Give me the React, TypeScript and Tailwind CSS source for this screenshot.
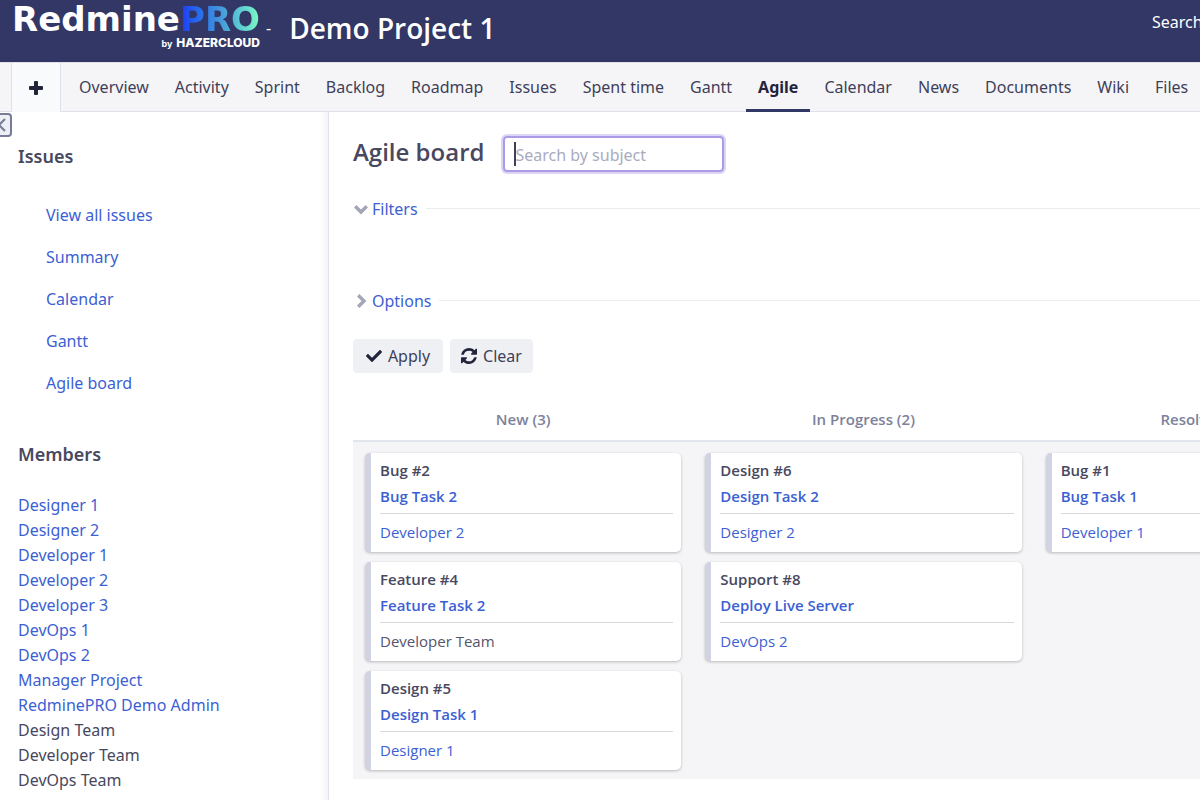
import React, { useState } from "react";
import { FaCheck } from "react-icons/fa";

type Card = {
  issue: string;
  subject: string;
  assignee: string;
  isGroup?: boolean;
};

type Column = {
  title: string;
  cards: Card[];
};

const tabs = [
  "Overview",
  "Activity",
  "Sprint",
  "Backlog",
  "Roadmap",
  "Issues",
  "Spent time",
  "Gantt",
  "Agile",
  "Calendar",
  "News",
  "Documents",
  "Wiki",
  "Files",
];

const issueLinks = ["View all issues", "Summary", "Calendar", "Gantt", "Agile board"];

const members = [
  "Designer 1",
  "Designer 2",
  "Developer 1",
  "Developer 2",
  "Developer 3",
  "DevOps 1",
  "DevOps 2",
  "Manager Project",
  "RedminePRO Demo Admin",
];

const groups = ["Design Team", "Developer Team", "DevOps Team"];

const columns: Column[] = [
  {
    title: "New (3)",
    cards: [
      { issue: "Bug #2", subject: "Bug Task 2", assignee: "Developer 2" },
      { issue: "Feature #4", subject: "Feature Task 2", assignee: "Developer Team", isGroup: true },
      { issue: "Design #5", subject: "Design Task 1", assignee: "Designer 1" },
    ],
  },
  {
    title: "In Progress (2)",
    cards: [
      { issue: "Design #6", subject: "Design Task 2", assignee: "Designer 2" },
      { issue: "Support #8", subject: "Deploy Live Server", assignee: "DevOps 2" },
    ],
  },
  {
    title: "Resolved (1)",
    cards: [{ issue: "Bug #1", subject: "Bug Task 1", assignee: "Developer 1" }],
  },
];

const Logo = () => (
  <a href="#" className="flex w-[248px] flex-col whitespace-nowrap">
    <span className="flex justify-between font-['DejaVu_Sans'] text-[34px] leading-8 font-bold">
      <span className="text-white">Redmine</span>
      <span className="bg-linear-to-r from-[#2433f5] via-[#4596dc] to-[#7dfcc0] bg-clip-text text-transparent">
        PRO
      </span>
    </span>
    <span className="flex items-baseline justify-end gap-1 pt-[2px] font-[Inter] leading-3 text-white">
      <span className="text-[9px] font-bold">by</span>
      <span className="text-xs leading-3 font-extrabold">HAZERCLOUD</span>
    </span>
  </a>
);

const PlusIcon = () => (
  <svg width="14" height="14" viewBox="0 0 14 14" fill="currentColor" aria-hidden="true">
    <path d="M6 0h2q1 0 1 1v4h4q1 0 1 1v2q0 1-1 1H9v4q0 1-1 1H6q-1 0-1-1V9H1Q0 9 0 8V6q0-1 1-1h4V1q0-1 1-1z" />
  </svg>
);

const ChevronIcon: React.FC<{ open: boolean }> = ({ open }) => (
  <svg width="14" height="14" viewBox="0 0 14 14" fill="none" stroke="currentColor" strokeWidth="3.4" aria-hidden="true">
    <path d={open ? "M1.200 4.200 7 10l5.800-5.800" : "M4.200 1.200 10 7l-5.800 5.800"} />
  </svg>
);

const RefreshIcon = () => (
  <svg width="16" height="16" viewBox="0 0 1536 1536" fill="currentColor" aria-hidden="true">
    <path d="M1511 928q0 5-1 7-64 268-268 434.500T764 1536q-146 0-282.500-55T238 1324l-129 129q-19 19-45 19t-45-19-19-45V960q0-26 19-45t45-19h448q26 0 45 19t19 45-19 45l-137 137q71 66 161 102t187 36q134 0 250-65t186-179q11-17 53-117 8-23 30-23h192q13 0 22.500 9.500t9.500 22.500zm25-800v448q0 26-19 45t-45 19h-448q-26 0-45-19t-19-45 19-45l138-138Q969 256 768 256q-134 0-250 65T332 500q-11 17-53 117-8 23-30 23H50q-13 0-22.500-9.500T18 608v-7q65-268 270-434.500T768 0q146 0 284 55.500T1297 212l130-129q19-19 45-19t45 19 19 45z" />
  </svg>
);

const TopBar = () => (
  <header className="flex h-[62px] items-start bg-[#323765] pl-3 text-white">
    <div className="pt-[3px]">
      <Logo />
    </div>
    <span className="pt-4 pl-[6px] text-base leading-6">-</span>
    <h1 className="grow pt-2 pl-[18px] font-['Open_Sans'] text-[28px] leading-10 font-semibold">Demo Project 1</h1>
    <a href="#" className="w-12 pt-[10px] text-base leading-6 whitespace-nowrap">
      Search:
    </a>
  </header>
);

const MainMenu = () => (
  <nav className="flex h-[50px] border-y border-[#dfe0ea] bg-[#f5f5f8] pl-[11px]">
    <a
      href="#"
      aria-label="New"
      className="-mb-px flex w-[50px] shrink-0 items-center justify-center border-x border-[#dfe0ea] bg-[#f9fafc] text-[#23233c]"
    >
      <PlusIcon />
    </a>
    <ul className="flex gap-[2px] pl-[6px] whitespace-nowrap">
      {tabs.map((tab) => (
        <li key={tab} className="flex">
          <a
            href="#"
            className={
              tab === "Agile"
                ? "-mb-px border-b-3 border-[#323765] px-3 pt-3 text-base leading-6 font-bold text-[#23233c]"
                : "px-3 pt-3 text-base leading-6 text-[#3f3f59]"
            }
          >
            {tab}
          </a>
        </li>
      ))}
    </ul>
  </nav>
);

const Sidebar = () => (
  <aside className="relative w-[329px] shrink-0 border-r border-[#e2e4ec] bg-linear-to-l from-[#f4f4f6] to-white to-[8px] px-[18px] pt-8 pb-2">
    <button
      type="button"
      aria-label="Collapse sidebar"
      className="absolute top-px -left-3 flex h-6 w-6 items-center justify-end rounded-sm border-2 border-[#757b98] bg-[#eeeff4] pr-1 text-[#757b98]"
    >
      <svg width="9" height="14" viewBox="0 0 9 14" fill="none" stroke="currentColor" strokeWidth="2" aria-hidden="true">
        <path d="M8 1 2 7l6 6" />
      </svg>
    </button>
    <h2 className="text-lg leading-6 font-semibold text-[#484860]">Issues</h2>
    <ul className="pt-[26px] pl-7">
      {issueLinks.map((link) => (
        <li key={link} className="h-[42px] text-base leading-[42px]">
          <a href="#" className="text-[#3c5fd3]">
            {link}
          </a>
        </li>
      ))}
    </ul>
    <h2 className="pt-[38px] text-lg leading-6 font-semibold text-[#484860]">Members</h2>
    <ul className="pt-[27px] text-base leading-[25px] text-[#484860]">
      {members.map((member) => (
        <li key={member}>
          <a href="#" className="text-[#3c5fd3]">
            {member}
          </a>
        </li>
      ))}
      {groups.map((group) => (
        <li key={group}>{group}</li>
      ))}
    </ul>
  </aside>
);

const IssueCard: React.FC<{ card: Card }> = ({ card }) => (
  <div className="h-[99px] rounded-[5px] border-l-6 border-[#d2d3e2] bg-white pt-1 pr-2 pl-[9px] text-[15px] shadow-[0_1px_3px_rgba(0,0,0,0.25)]">
    <p className="leading-[26px] font-semibold text-[#484860]">{card.issue}</p>
    <div className="border-b border-[#d9d9de] pb-1 leading-[26px]">
      <a href="#" className="font-semibold text-[#3c5fd3]">
        {card.subject}
      </a>
    </div>
    <p className="pt-[6px] leading-6 text-[#55556c]">
      {card.isGroup ? (
        card.assignee
      ) : (
        <a href="#" className="text-[#3c5fd3]">
          {card.assignee}
        </a>
      )}
    </p>
  </div>
);

const Board = () => (
  <div className="mt-[26px] overflow-hidden font-['Open_Sans']">
    <table className="w-[1021px] table-fixed border-collapse">
      <thead>
        <tr>
          {columns.map((column) => (
            <th
              key={column.title}
              className="h-[42px] border-b-2 border-[#e3e5ec] text-[15px] font-semibold text-[#7d829b]"
            >
              {column.title}
            </th>
          ))}
        </tr>
      </thead>
      <tbody>
        <tr className="bg-[#f5f5f8]">
          {columns.map((column) => (
            <td key={column.title} className="px-3 pt-[11px] pb-[9px] align-top">
              <div className="flex flex-col gap-[10px]">
                {column.cards.map((card) => (
                  <IssueCard key={card.issue} card={card} />
                ))}
              </div>
            </td>
          ))}
        </tr>
      </tbody>
    </table>
  </div>
);

const SectionToggle: React.FC<{ title: string; open: boolean; onToggle: () => void }> = (props) => (
  <div className="flex h-6 items-center gap-2">
    <button
      type="button"
      onClick={props.onToggle}
      aria-expanded={props.open}
      className="flex items-center gap-1 text-base leading-6 text-[#3c5fd3]"
    >
      <span className="flex w-[15px] justify-center text-[#a3a6b8]">
        <ChevronIcon open={props.open} />
      </span>
      {props.title}
    </button>
    <span className="mb-[2px] h-px grow bg-[#ececf0]" />
  </div>
);

const App: React.FC = () => {
  const [subject, setSubject] = useState("");
  const [filtersOpen, setFiltersOpen] = useState(true);
  const [optionsOpen, setOptionsOpen] = useState(false);

  return (
    <div className="flex min-h-screen flex-col overflow-hidden bg-white font-['Noto_Sans',sans-serif]">
      <TopBar />
      <MainMenu />
      <div className="flex grow">
        <Sidebar />
        <main className="min-w-0 grow pt-6 pl-6">
          <div className="flex items-center gap-[19px]">
            <h2 className="pb-1 font-['Open_Sans'] text-2xl leading-8 font-semibold text-[#484860]">Agile board</h2>
            <div className="relative">
              <input
                type="text"
                aria-label="Search by subject"
                value={subject}
                onChange={(e) => setSubject(e.target.value)}
                placeholder="Search by subject"
                className="h-9 w-[221px] rounded-sm border-2 border-[#ab9be6] px-[10px] pt-[2px] text-base text-[#484860] shadow-[0_0_0_2px_#dcd5f6] outline-none placeholder:text-[#a9acc0]"
              />
              {subject === "" && <span className="absolute top-[6px] left-[11px] h-6 w-[2px] bg-[#3f3f59]" />}
            </div>
          </div>
          <div className="h-[92px] pt-[25px]">
            <SectionToggle title="Filters" open={filtersOpen} onToggle={() => setFiltersOpen(!filtersOpen)} />
          </div>
          <div className="pt-[25px]">
            <SectionToggle title="Options" open={optionsOpen} onToggle={() => setOptionsOpen(!optionsOpen)} />
          </div>
          <div className="flex gap-[7px] pt-[26px]">
            <button
              type="button"
              className="flex h-[34px] w-[90px] items-center justify-center gap-[6px] rounded-sm bg-[#eff0f4] text-base text-[#3f3f59]"
            >
              <FaCheck size={16} className="text-[#23233c]" />
              Apply
            </button>
            <button
              type="button"
              onClick={() => setSubject("")}
              className="flex h-[34px] w-[83px] items-center justify-center gap-[6px] rounded-sm bg-[#eff0f4] text-base text-[#3f3f59]"
            >
              <span className="text-[#23233c]">
                <RefreshIcon />
              </span>
              Clear
            </button>
          </div>
          <Board />
        </main>
      </div>
    </div>
  );
};

export default App;
